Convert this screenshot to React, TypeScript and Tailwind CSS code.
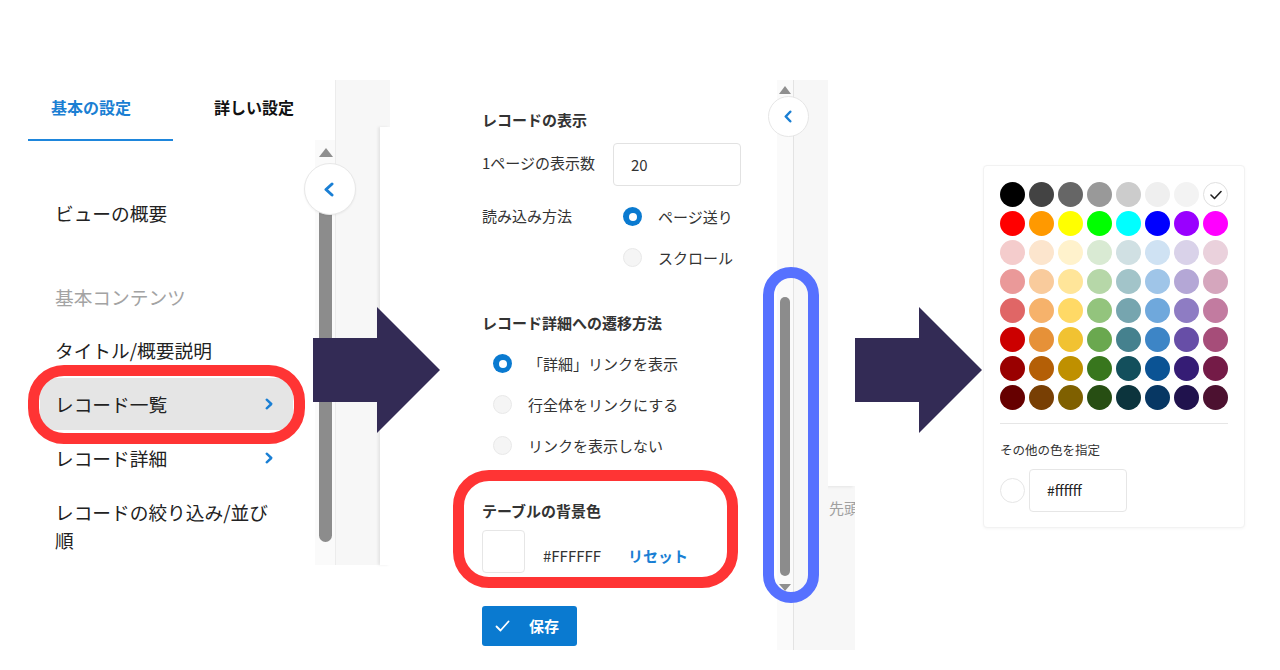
import React from "react";

function Chevron({ dir, w, h, sw }: { dir: "left" | "right"; w: number; h: number; sw: number }) {
  return (
    <svg width={w} height={h} viewBox={`0 0 ${w} ${h}`}>
      <polyline
        points={
          dir === "left"
            ? `${w - sw / 2 - 0.5},${sw / 2 + 0.5} ${sw / 2 + 0.5},${h / 2} ${w - sw / 2 - 0.5},${h - sw / 2 - 0.5}`
            : `${sw / 2 + 0.5},${sw / 2 + 0.5} ${w - sw / 2 - 0.5},${h / 2} ${sw / 2 + 0.5},${h - sw / 2 - 0.5}`
        }
        fill="none"
        stroke="#1a7fd4"
        strokeWidth={sw}
        strokeLinecap="round"
        strokeLinejoin="round"
      />
    </svg>
  );
}

function Radio({ on }: { on: boolean }) {
  return on ? (
    <div className="flex h-[19px] w-[19px] shrink-0 items-center justify-center rounded-full bg-[#0a7ad0]">
      <div className="h-[8px] w-[8px] rounded-full bg-white" />
    </div>
  ) : (
    <div className="h-[19px] w-[19px] shrink-0 rounded-full border border-[#e9e9e9] bg-[#f5f5f5]" />
  );
}

function Arrow() {
  return (
    <svg width="128" height="126" viewBox="0 0 128 126">
      <polygon points="0,31 64,31 64,0 127,63 64,126 64,95 0,95" fill="#332b55" />
    </svg>
  );
}

const PALETTE = [
  ["#000000", "#434343", "#666666", "#999999", "#cccccc", "#efefef", "#f3f3f3", "#ffffff"],
  ["#ff0000", "#ff9900", "#ffff00", "#00ff00", "#00ffff", "#0000ff", "#9900ff", "#ff00ff"],
  ["#f4cccc", "#fce5cd", "#fff2cc", "#d9ead3", "#d0e0e3", "#cfe2f3", "#d9d2e9", "#ead1dc"],
  ["#ea9999", "#f9cb9c", "#ffe599", "#b6d7a8", "#a2c4c9", "#9fc5e8", "#b4a7d6", "#d5a6bd"],
  ["#e06666", "#f6b26b", "#ffd966", "#93c47d", "#76a5af", "#6fa8dc", "#8e7cc3", "#c27ba0"],
  ["#cc0000", "#e69138", "#f1c232", "#6aa84f", "#45818e", "#3d85c6", "#674ea7", "#a64d79"],
  ["#990000", "#b45f06", "#bf9000", "#38761d", "#134f5c", "#0b5394", "#351c75", "#741b47"],
  ["#660000", "#783f04", "#7f6000", "#274e13", "#0c343d", "#073763", "#20124d", "#4c1130"],
];

function Panel1() {
  return (
    <div className="relative mt-[80px] flex h-[485px] w-[390px] shrink-0">
      <div className="w-[315px] shrink-0 bg-white">
        <div className="flex h-[61px]">
          <div className="ml-[28px] w-[145px] border-b-2 border-[#1e86dc] pl-[23px] pt-[15px] text-[16px] font-bold leading-[24px] text-[#1b7fd3]">
            基本の設定
          </div>
          <div className="ml-[41px] pt-[15px] text-[16px] font-bold leading-[24px] text-[#111]">詳しい設定</div>
        </div>
        <div className="ml-[40px] w-[253px] text-[18.7px] text-[#222]">
          <div className="mt-[45px] flex h-[54px] items-center px-[15px]">ビューの概要</div>
          <div className="mt-[31px] flex h-[52px] items-center px-[15px] text-[#a3a3a3]">基本コンテンツ</div>
          <div className="flex h-[54px] items-center px-[15px]">タイトル/概要説明</div>
          <div className="flex h-[54px] items-center py-px">
            <div className="flex h-[52px] w-full items-center justify-between rounded-[8px] bg-[#e5e5e5] pl-[15px] pr-[20px]">
              <span>レコード一覧</span>
              <Chevron dir="right" w={8} h={12} sw={2.4} />
            </div>
          </div>
          <div className="flex h-[54px] items-center justify-between pl-[15px] pr-[20px]">
            <span>レコード詳細</span>
            <Chevron dir="right" w={8} h={12} sw={2.4} />
          </div>
          <div className="px-[15px] pt-[13px] leading-[28px]">レコードの絞り込み/並び順</div>
        </div>
      </div>
      <div className="mt-[60px] flex w-[20px] shrink-0 flex-col items-start bg-[#fafafa]">
        <div className="ml-[4px] mt-[8px] h-0 w-0 border-x-[7px] border-b-[9px] border-x-transparent border-b-[#8f8f8f]" />
        <div className="ml-[4px] mt-[13px] h-[372px] w-[13px] rounded-full bg-[#8c8c8c]" />
      </div>
      <div className="flex w-[55px] shrink-0 border-l border-[#ececec] bg-[#f7f7f7]">
        <div className="ml-[44px] mt-[47px] w-[10px] bg-white shadow-[-2px_0_3px_rgba(0,0,0,0.08)]" />
      </div>
      <div className="absolute left-[304px] top-[83px] flex h-[52px] w-[52px] items-center justify-center rounded-full border border-[#e8e8e8] bg-white shadow-[0_1px_2px_rgba(0,0,0,0.05)]">
        <span className="mr-[3px] flex">
          <Chevron dir="left" w={10} h={15} sw={3} />
        </span>
      </div>
    </div>
  );
}

function Panel2() {
  return (
    <div className="relative ml-[65px] mt-[80px] flex h-[570px] w-[400px] shrink-0 overflow-hidden">
      <div className="w-[322px] shrink-0 bg-white pl-[27px] text-[15px] leading-[24px] text-[#333]">
        <div className="pt-[28px] font-bold">レコードの表示</div>
        <div className="mt-[11px] flex items-start">
          <div className="w-[131px] shrink-0 pt-[8px]">1ページの表示数</div>
          <div className="flex h-[43px] w-[128px] items-center rounded-[4px] border border-[#e2e2e2] pl-[17px]">20</div>
        </div>
        <div className="mt-[10px] flex">
          <div className="w-[141px] shrink-0 pt-[8px]">読み込み方法</div>
          <div className="flex flex-col">
            <div className="flex h-[41px] items-center gap-[16px]">
              <Radio on />
              <span>ページ送り</span>
            </div>
            <div className="flex h-[41px] items-center gap-[16px]">
              <Radio on={false} />
              <span>スクロール</span>
            </div>
          </div>
        </div>
        <div className="mt-[33px] font-bold">レコード詳細への遷移方法</div>
        <div className="ml-[11px] mt-[8px] flex flex-col">
          <div className="flex h-[41px] items-center gap-[16px]">
            <Radio on />
            <span>「詳細」リンクを表示</span>
          </div>
          <div className="flex h-[41px] items-center gap-[16px]">
            <Radio on={false} />
            <span>行全体をリンクにする</span>
          </div>
          <div className="flex h-[41px] items-center gap-[16px]">
            <Radio on={false} />
            <span>リンクを表示しない</span>
          </div>
        </div>
        <div className="mt-[33px] font-bold">テーブルの背景色</div>
        <div className="mt-[7px] flex items-end">
          <div className="h-[43px] w-[43px] rounded-[4px] border border-[#e6e6e6] bg-white" />
          <span className="mb-[5px] ml-[18px]">#FFFFFF</span>
          <span className="mb-[5px] ml-[27px] font-bold text-[#1a7fd4]">リセット</span>
        </div>
        <div className="mt-[33px] flex h-[40px] w-[95px] items-center rounded-[3px] bg-[#0a7ad0] pl-[13px] text-white">
          <svg width="15" height="12" viewBox="0 0 15 12">
            <polyline points="1.5,6.5 5.5,10.5 13.5,1.5" fill="none" stroke="white" strokeWidth="1.8" strokeLinecap="round" strokeLinejoin="round" />
          </svg>
          <span className="ml-[19px] font-bold">保存</span>
        </div>
      </div>
      <div className="flex w-[16px] shrink-0 flex-col items-start bg-[#fafafa]">
        <div className="ml-[2px] mt-[6px] h-0 w-0 border-x-[6px] border-b-[8px] border-x-transparent border-b-[#8f8f8f]" />
        <div className="ml-[3px] mt-[203px] h-[279px] w-[10px] rounded-full bg-[#8c8c8c]" />
        <div className="ml-[2px] mt-[8px] h-0 w-0 border-x-[6px] border-t-[7px] border-x-transparent border-t-[#8f8f8f]" />
      </div>
      <div className="w-[35px] shrink-0 border-l border-[#e3e3e3] bg-[#f7f7f7]" />
      <div className="flex w-[27px] shrink-0 flex-col overflow-hidden bg-[#f7f7f7]">
        <div className="h-[406px] bg-white shadow-[-2px_1px_3px_rgba(0,0,0,0.08)]" />
        <div className="whitespace-nowrap pl-[1px] pt-[10px] text-[15px] leading-[24px] text-[#a0a0a0]">先頭</div>
      </div>
      <div className="absolute left-[313px] top-[16px] flex h-[41px] w-[41px] items-center justify-center rounded-full border border-[#e6e6e6] bg-white">
        <span className="mr-[2px] flex">
          <Chevron dir="left" w={8} h={13} sw={2.5} />
        </span>
      </div>
    </div>
  );
}

function Panel3() {
  return (
    <div className="ml-[128px] mt-[165px] w-[262px] shrink-0 rounded-[4px] border border-[#f2f2f2] bg-white px-[16px] pb-[15px] pt-[16px] shadow-[0_1px_3px_rgba(0,0,0,0.04)]">
      <div className="grid w-[228px] grid-cols-8 gap-[4px]">
        {PALETTE.flat().map((c, i) =>
          i === 7 ? (
            <div key={i} className="flex h-[25px] w-[25px] items-center justify-center rounded-full border border-[#e0e0e0] bg-white">
              <svg width="12" height="10" viewBox="0 0 12 10">
                <polyline points="1,5 4.5,8.5 11,1.5" fill="none" stroke="#222" strokeWidth="1.6" strokeLinecap="round" strokeLinejoin="round" />
              </svg>
            </div>
          ) : (
            <div key={i} className="h-[25px] w-[25px] rounded-full" style={{ backgroundColor: c }} />
          )
        )}
      </div>
      <div className="mt-[13px] h-px w-[228px] bg-[#e6e6e6]" />
      <div className="mt-[16px] text-[12.5px] leading-[20px] text-[#333]">その他の色を指定</div>
      <div className="mt-[9px] flex items-center gap-[4px]">
        <div className="h-[25px] w-[25px] rounded-full border border-[#e6e6e6] bg-white" />
        <div className="flex h-[43px] w-[98px] items-center rounded-[4px] border border-[#e6e6e6] pl-[17px] text-[14px] text-[#222]">
          #ffffff
        </div>
      </div>
    </div>
  );
}

export default function App() {
  return (
    <div className="relative flex h-[670px] w-[1280px] items-start overflow-hidden bg-white font-['Noto_Sans_CJK_JP','Noto_Sans',sans-serif]">
      <Panel1 />
      <Panel2 />
      <Panel3 />

      <div className="absolute left-[313px] top-[307px]">
        <Arrow />
      </div>
      <div className="absolute left-[855px] top-[307px]">
        <Arrow />
      </div>

      <div className="absolute left-[28px] top-[365px] h-[79px] w-[277px] rounded-[36px] border-[11px] border-[#ff3434]" />
      <div className="absolute left-[453px] top-[470px] h-[118px] w-[285px] rounded-[36px] border-[11px] border-[#ff3434]" />
      <div className="absolute left-[763px] top-[267px] h-[336px] w-[56px] rounded-full border-[11px] border-[#5671ff]" />
    </div>
  );
}
